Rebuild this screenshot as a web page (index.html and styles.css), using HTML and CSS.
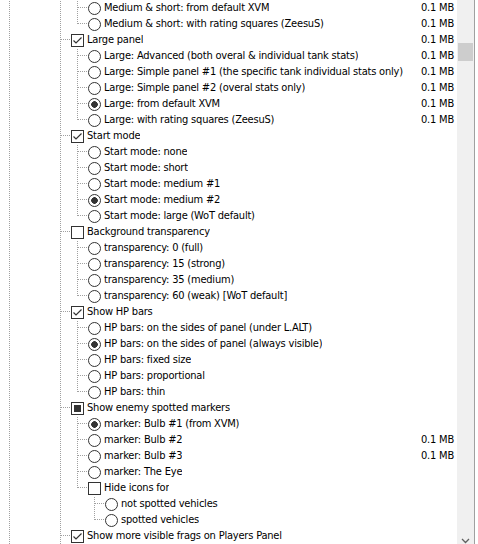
FILE: index.html
```html
<!DOCTYPE html>
<html>
<head>
<meta charset="utf-8">
<link rel="stylesheet" href="styles.css">
</head>
<body>
<div class="frame">
  <div class="list">
    <div class="row"><span class="g v"></span><span class="g"></span><span class="g"></span><span class="g v"></span><span class="g t"></span><span class="ctl"><span class="radio"></span></span><span class="label">Medium &amp; short: from default XVM</span><span class="size">0.1 MB</span></div>
    <div class="row"><span class="g v"></span><span class="g"></span><span class="g"></span><span class="g v"></span><span class="g l"></span><span class="ctl"><span class="radio"></span></span><span class="label">Medium &amp; short: with rating squares (ZeesuS)</span><span class="size">0.1 MB</span></div>
    <div class="row"><span class="g v"></span><span class="g"></span><span class="g"></span><span class="g t"></span><span class="ctl"><span class="check on"></span></span><span class="label">Large panel</span><span class="size">0.1 MB</span></div>
    <div class="row"><span class="g v"></span><span class="g"></span><span class="g"></span><span class="g v"></span><span class="g t"></span><span class="ctl"><span class="radio"></span></span><span class="label">Large: Advanced (both overal &amp; individual tank stats)</span><span class="size">0.1 MB</span></div>
    <div class="row"><span class="g v"></span><span class="g"></span><span class="g"></span><span class="g v"></span><span class="g t"></span><span class="ctl"><span class="radio"></span></span><span class="label">Large: Simple panel #1 (the specific tank individual stats only)</span><span class="size">0.1 MB</span></div>
    <div class="row"><span class="g v"></span><span class="g"></span><span class="g"></span><span class="g v"></span><span class="g t"></span><span class="ctl"><span class="radio"></span></span><span class="label">Large: Simple panel #2 (overal stats only)</span><span class="size">0.1 MB</span></div>
    <div class="row"><span class="g v"></span><span class="g"></span><span class="g"></span><span class="g v"></span><span class="g t"></span><span class="ctl"><span class="radio on"></span></span><span class="label">Large: from default XVM</span><span class="size">0.1 MB</span></div>
    <div class="row"><span class="g v"></span><span class="g"></span><span class="g"></span><span class="g v"></span><span class="g l"></span><span class="ctl"><span class="radio"></span></span><span class="label">Large: with rating squares (ZeesuS)</span><span class="size">0.1 MB</span></div>
    <div class="row"><span class="g v"></span><span class="g"></span><span class="g"></span><span class="g t"></span><span class="ctl"><span class="check on"></span></span><span class="label">Start mode</span></div>
    <div class="row"><span class="g v"></span><span class="g"></span><span class="g"></span><span class="g v"></span><span class="g t"></span><span class="ctl"><span class="radio"></span></span><span class="label">Start mode: none</span></div>
    <div class="row"><span class="g v"></span><span class="g"></span><span class="g"></span><span class="g v"></span><span class="g t"></span><span class="ctl"><span class="radio"></span></span><span class="label">Start mode: short</span></div>
    <div class="row"><span class="g v"></span><span class="g"></span><span class="g"></span><span class="g v"></span><span class="g t"></span><span class="ctl"><span class="radio"></span></span><span class="label">Start mode: medium #1</span></div>
    <div class="row"><span class="g v"></span><span class="g"></span><span class="g"></span><span class="g v"></span><span class="g t"></span><span class="ctl"><span class="radio on"></span></span><span class="label">Start mode: medium #2</span></div>
    <div class="row"><span class="g v"></span><span class="g"></span><span class="g"></span><span class="g v"></span><span class="g l"></span><span class="ctl"><span class="radio"></span></span><span class="label">Start mode: large (WoT default)</span></div>
    <div class="row"><span class="g v"></span><span class="g"></span><span class="g"></span><span class="g t"></span><span class="ctl"><span class="check"></span></span><span class="label">Background transparency</span></div>
    <div class="row"><span class="g v"></span><span class="g"></span><span class="g"></span><span class="g v"></span><span class="g t"></span><span class="ctl"><span class="radio"></span></span><span class="label">transparency: 0 (full)</span></div>
    <div class="row"><span class="g v"></span><span class="g"></span><span class="g"></span><span class="g v"></span><span class="g t"></span><span class="ctl"><span class="radio"></span></span><span class="label">transparency: 15 (strong)</span></div>
    <div class="row"><span class="g v"></span><span class="g"></span><span class="g"></span><span class="g v"></span><span class="g t"></span><span class="ctl"><span class="radio"></span></span><span class="label">transparency: 35 (medium)</span></div>
    <div class="row"><span class="g v"></span><span class="g"></span><span class="g"></span><span class="g v"></span><span class="g l"></span><span class="ctl"><span class="radio"></span></span><span class="label">transparency: 60 (weak) [WoT default]</span></div>
    <div class="row"><span class="g v"></span><span class="g"></span><span class="g"></span><span class="g t"></span><span class="ctl"><span class="check on"></span></span><span class="label">Show HP bars</span></div>
    <div class="row"><span class="g v"></span><span class="g"></span><span class="g"></span><span class="g v"></span><span class="g t"></span><span class="ctl"><span class="radio"></span></span><span class="label">HP bars: on the sides of panel (under L.ALT)</span></div>
    <div class="row"><span class="g v"></span><span class="g"></span><span class="g"></span><span class="g v"></span><span class="g t"></span><span class="ctl"><span class="radio on"></span></span><span class="label">HP bars: on the sides of panel (always visible)</span></div>
    <div class="row"><span class="g v"></span><span class="g"></span><span class="g"></span><span class="g v"></span><span class="g t"></span><span class="ctl"><span class="radio"></span></span><span class="label">HP bars: fixed size</span></div>
    <div class="row"><span class="g v"></span><span class="g"></span><span class="g"></span><span class="g v"></span><span class="g t"></span><span class="ctl"><span class="radio"></span></span><span class="label">HP bars: proportional</span></div>
    <div class="row"><span class="g v"></span><span class="g"></span><span class="g"></span><span class="g v"></span><span class="g l"></span><span class="ctl"><span class="radio"></span></span><span class="label">HP bars: thin</span></div>
    <div class="row"><span class="g v"></span><span class="g"></span><span class="g"></span><span class="g t"></span><span class="ctl"><span class="check part"></span></span><span class="label">Show enemy spotted markers</span></div>
    <div class="row"><span class="g v"></span><span class="g"></span><span class="g"></span><span class="g v"></span><span class="g t"></span><span class="ctl"><span class="radio on"></span></span><span class="label">marker: Bulb #1 (from XVM)</span></div>
    <div class="row"><span class="g v"></span><span class="g"></span><span class="g"></span><span class="g v"></span><span class="g t"></span><span class="ctl"><span class="radio"></span></span><span class="label">marker: Bulb #2</span><span class="size">0.1 MB</span></div>
    <div class="row"><span class="g v"></span><span class="g"></span><span class="g"></span><span class="g v"></span><span class="g t"></span><span class="ctl"><span class="radio"></span></span><span class="label">marker: Bulb #3</span><span class="size">0.1 MB</span></div>
    <div class="row"><span class="g v"></span><span class="g"></span><span class="g"></span><span class="g v"></span><span class="g t"></span><span class="ctl"><span class="radio"></span></span><span class="label">marker: The Eye</span></div>
    <div class="row"><span class="g v"></span><span class="g"></span><span class="g"></span><span class="g v"></span><span class="g l"></span><span class="ctl"><span class="check"></span></span><span class="label">Hide icons for</span></div>
    <div class="row"><span class="g v"></span><span class="g"></span><span class="g"></span><span class="g v"></span><span class="g"></span><span class="g t"></span><span class="ctl"><span class="radio"></span></span><span class="label">not spotted vehicles</span></div>
    <div class="row"><span class="g v"></span><span class="g"></span><span class="g"></span><span class="g v"></span><span class="g"></span><span class="g l"></span><span class="ctl"><span class="radio"></span></span><span class="label">spotted vehicles</span></div>
    <div class="row"><span class="g v"></span><span class="g"></span><span class="g"></span><span class="g t"></span><span class="ctl"><span class="check on"></span></span><span class="label">Show more visible frags on Players Panel</span></div>
  </div>
  <div class="scrollbar">
    <div class="thumb"></div>
    <svg class="arrow-down" width="9" height="6" viewBox="0 0 9 6"><path d="M1 1 L4.5 4.5 L8 1" fill="none" stroke="#606060" stroke-width="1.3"/></svg>
  </div>
  <div class="edge"></div>
  <div class="rest"></div>
</div>
</body>
</html>
```

FILE: styles.css
```css
* { box-sizing: border-box; }
html, body { margin: 0; padding: 0; background: #ffffff; }
.frame {
  display: flex;
  width: 478px;
  height: 544px;
  overflow: hidden;
  background: #ffffff;
  font-family: "DejaVu Sans Condensed", "DejaVu Sans", sans-serif;
  font-stretch: condensed;
  font-size: 11px;
  letter-spacing: -0.2px;
  color: #000000;
}
.list {
  width: 457px;
  flex: none;
  display: flex;
  flex-direction: column;
  padding-left: 1px;
  padding-right: 3px;
}
.row {
  display: flex;
  align-items: flex-start;
  height: 16px;
  flex: none;
  white-space: nowrap;
}
.g {
  display: flex;
  align-items: flex-start;
  width: 17px;
  height: 16px;
  flex: none;
}
.g.v::before, .g.t::before, .g.l::before {
  content: "";
  width: 1px;
  height: 16px;
  margin-left: 8px;
  background: linear-gradient(to bottom, transparent 50%, #a0a0a0 50%) 0 0 / 1px 2px repeat-y;
}
.g.l::before { height: 8px; }
.g.t::after, .g.l::after {
  content: "";
  width: 8px;
  height: 1px;
  margin-top: 7px;
  background: linear-gradient(to right, #a0a0a0 50%, transparent 50%) 0 0 / 2px 1px repeat-x;
}
.ctl {
  width: 18px;
  height: 16px;
  flex: none;
  display: flex;
  align-items: flex-start;
  background: linear-gradient(#a0a0a0, #a0a0a0) 0 7px / 1px 1px no-repeat;
}
.check {
  width: 13px;
  height: 13px;
  margin: 2px 0 0 2px;
  border: 1px solid #333333;
  background: #ffffff;
  display: block;
}
.check.on {
  background: #ffffff url("data:image/svg+xml;utf8,<svg xmlns='http://www.w3.org/2000/svg' width='11' height='11' viewBox='0 0 11 11'><path d='M1.5 5.5 L4 8 L9.5 2.5' fill='none' stroke='%23333333' stroke-width='1.2'/></svg>") 0 0 / 11px 11px no-repeat;
}
.check.part {
  background: #ffffff linear-gradient(#333333, #333333) 2px 2px / 7px 7px no-repeat;
}
.radio {
  width: 13px;
  height: 13px;
  margin: 2px 0 0 2px;
  border: 1px solid #333333;
  border-radius: 50%;
  background: #ffffff;
  display: block;
}
.radio.on {
  background: #ffffff radial-gradient(circle at 50% 50%, #333333 0 3px, transparent 3.6px);
}
.label {
  line-height: 16px;
  height: 16px;
  flex: 0 1 auto;
  min-width: 0;
  overflow: hidden;
}
.size {
  margin-left: auto;
  flex: none;
  line-height: 16px;
  height: 16px;
  padding-left: 8px;
}
.scrollbar {
  width: 17px;
  flex: none;
  background: #f0f0f0;
  display: flex;
  flex-direction: column;
  align-items: flex-start;
}
.thumb {
  width: 15px;
  height: 18px;
  margin: 43px 0 0 1px;
  background: #cdcdcd;
}
.arrow-down {
  display: block;
  margin: auto 0 0 4px;
}
.edge {
  width: 1px;
  flex: none;
  background: #a0a0a0;
}
.rest {
  flex: 1;
  background: #ffffff;
}
```
